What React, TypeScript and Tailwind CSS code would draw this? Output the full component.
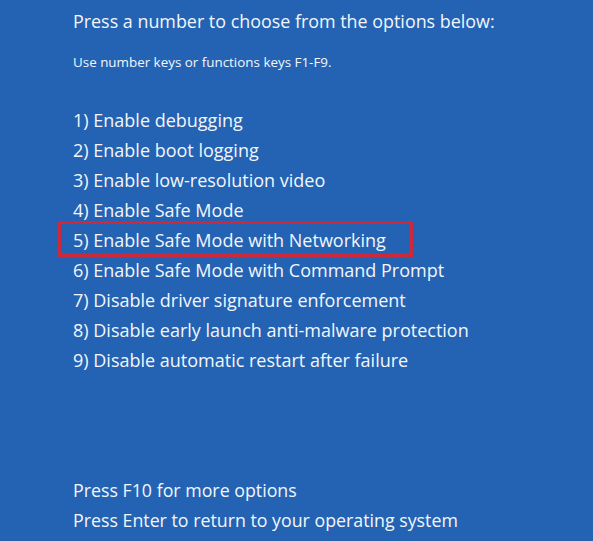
import React from "react";

const items = [
  "1) Enable debugging",
  "2) Enable boot logging",
  "3) Enable low-resolution video",
  "4) Enable Safe Mode",
  "5) Enable Safe Mode with Networking",
  "6) Enable Safe Mode with Command Prompt",
  "7) Disable driver signature enforcement",
  "8) Disable early launch anti-malware protection",
  "9) Disable automatic restart after failure",
];

export default function App() {
  return (
    <div
      className="w-[593px] h-[541px] overflow-hidden bg-[#2463b3] text-[#f2f6fb] pl-[73px] pt-[6px]"
      style={{ fontFamily: '"Open Sans", "Noto Sans", sans-serif' }}
    >
      <div className="text-[17.9px] leading-[30px]">Press a number to choose from the options below:</div>
      <div className="text-[13.4px] leading-[20px] mt-[16px]">Use number keys or functions keys F1-F9.</div>
      <div className="mt-[33px] flex flex-col">
        {items.map((t, i) => (
          <div key={t} className="relative text-[18px] leading-[30px]">
            {t}
            {i === 4 && (
              <div className="absolute left-[-15px] top-[-4px] w-[355px] h-[36px] border-[3px] border-[#cc2a3c]" />
            )}
          </div>
        ))}
      </div>
      <div className="mt-[100px] flex flex-col">
        <div className="text-[17.8px] leading-[30px]">Press F10 for more options</div>
        <div className="text-[17.8px] leading-[30px]">Press Enter to return to your operating system</div>
      </div>
    </div>
  );
}
